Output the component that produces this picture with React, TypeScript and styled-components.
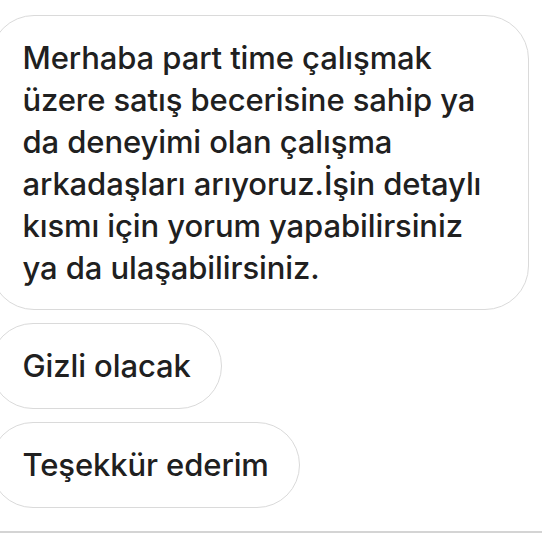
import styled, { createGlobalStyle } from "styled-components";

const GlobalStyle = createGlobalStyle`
    html, body {
        margin: 0;
        padding: 0;
        background: #fff;
    }
    body {
        font-family: Inter, "Liberation Sans", "Noto Sans", sans-serif;
        color: #202020;
        -webkit-font-smoothing: antialiased;
    }
`;

const Thread = styled.div`
    width: 542px;
    height: 542px;
    overflow: hidden;
    display: flex;
    flex-direction: column;
    align-items: flex-start;
    padding-top: 15px;
    box-sizing: border-box;
`;

const Messages = styled.div`
    display: flex;
    flex-direction: column;
    align-items: flex-start;
    gap: 13px;
    margin-left: -10px;
`;

const Bubble = styled.div<{ $pill?: boolean }>`
    box-sizing: border-box;
    border: 1.5px solid #dadada;
    background: #fff;
    border-radius: ${(p) => (p.$pill ? "43px" : "44px")};
    padding: ${(p) => (p.$pill ? "0 30px 0 31.5px" : "21px 28px 21px 31.5px")};
    height: ${(p) => (p.$pill ? "86px" : "auto")};
    display: flex;
    align-items: center;
    font-size: 31px;
    line-height: 42px;
    font-weight: 500;
    letter-spacing: -0.1px;
    white-space: nowrap;
`;

const LongBubble = styled(Bubble)`
    display: block;
    width: 539px;
    height: 295px;
`;

const Divider = styled.div`
    width: 100%;
    height: 2px;
    background: #d4d4d4;
    margin-top: 23px;
`;

export default function App() {
    return (
        <>
            <GlobalStyle />
            <Thread>
                <Messages>
                    <LongBubble>
                        Merhaba part time çalışmak
                        <br />
                        üzere satış becerisine sahip ya
                        <br />
                        da deneyimi olan çalışma
                        <br />
                        arkadaşları arıyoruz.İşin detaylı
                        <br />
                        kısmı için yorum yapabilirsiniz
                        <br />
                        ya da ulaşabilirsiniz.
                    </LongBubble>
                    <Bubble $pill>Gizli olacak</Bubble>
                    <Bubble $pill>Teşekkür ederim</Bubble>
                </Messages>
                <Divider />
            </Thread>
        </>
    );
}
